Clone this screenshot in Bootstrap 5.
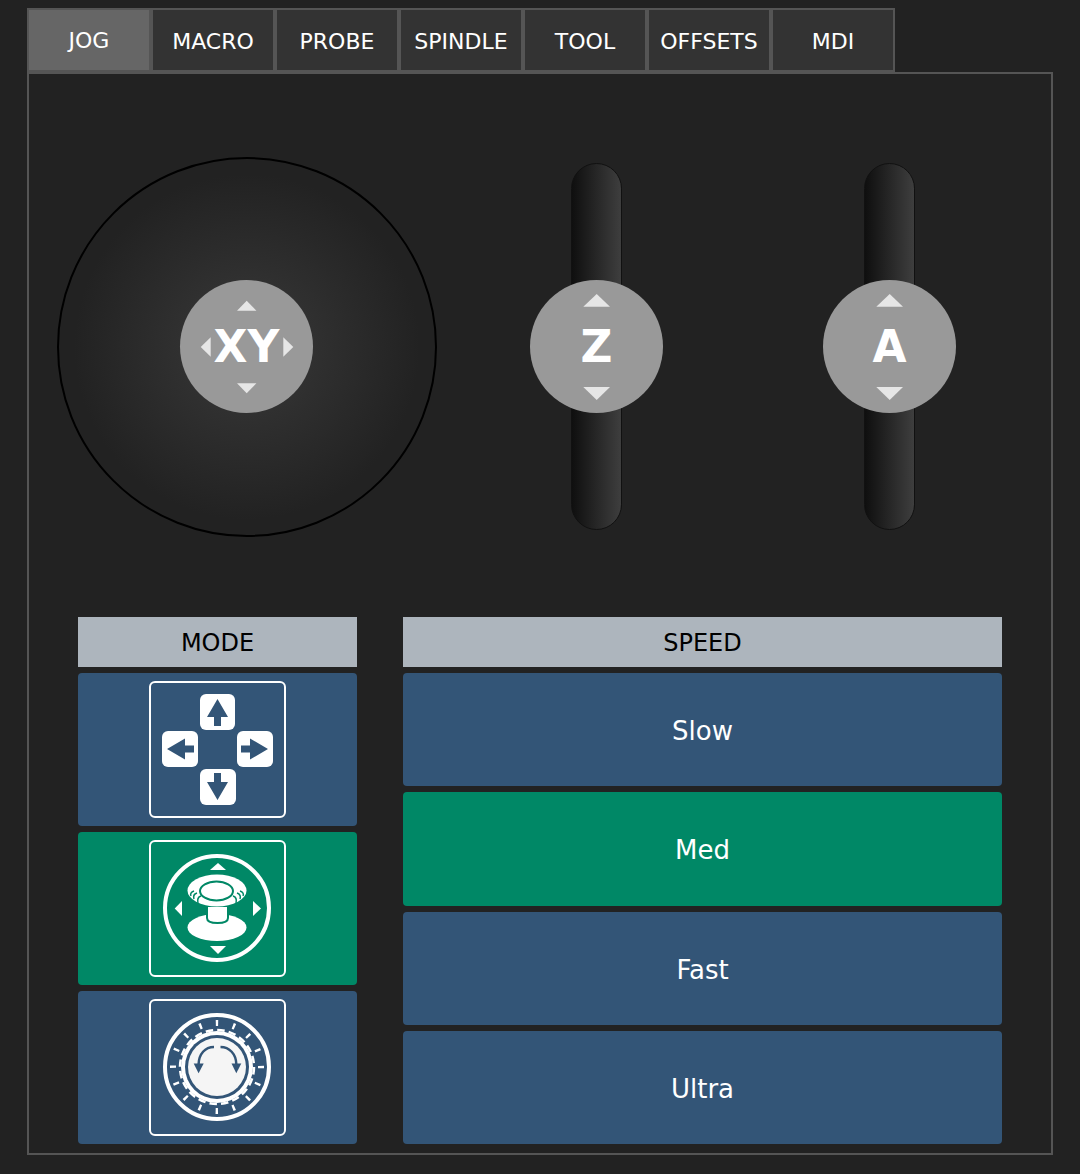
<!DOCTYPE html>
<html lang="en">
<head>
  <meta charset="UTF-8">
  <title>Jog</title>
  <link rel="stylesheet" href="https://cdn.jsdelivr.net/npm/bootstrap@5.3.0/dist/css/bootstrap.min.css">
  <style>
    body { background-color: #222; color: #fff; font-family: "DejaVu Sans", sans-serif; padding: 8px 0 0 27px; }
    .tab-strip { width: 868px; height: 64px; }
    .tab-btn { width: 124px; height: 64px; background: #333; border: 2px solid #555; color: #fff; font-size: 22px; padding: 2px 0 0; }
    .tab-btn.is-on { background: #666; padding: 0; }
    .jog-panel { width: 1026px; height: 1083px; border: 2px solid #555; padding: 83px 0 0 28px; }
    .jog-row { height: 380px; }
    .stick-area { width: 380px; height: 380px; border: 2px solid #000; border-radius: 50%; background: radial-gradient(circle closest-side, #393939 0%, #222 92%); }
    .stick-area .knob { margin: -1px 0 0 -1px; }
    .knob { width: 133px; height: 133px; border-radius: 50%; background: #999; font-size: 44px; font-weight: 700; line-height: 1; }
    .knob svg { position: absolute; left: 0; top: 0; }
    .slider-col { width: 133px; height: 367px; margin-top: 6px; }
    .col-z { margin-left: 93px; }
    .col-a { margin-left: 160px; }
    .slider-track { width: 51px; height: 367px; margin-left: 41px; border: 1px solid #111; border-radius: 26px; background: linear-gradient(to right, #0f0f0f, #3e3e3e); }
    .slider-col .knob { position: absolute; left: 0; top: 117px; }
    .lower-row { margin: 80px 0 0 21px; gap: 46px; }
    .mode-col { width: 279px; gap: 6px; }
    .speed-col { width: 599px; gap: 6px; }
    .head-box { height: 50px; background: #adb5bd; color: #000; font-size: 24px; padding-top: 2px; }
    .pick-btn { background: #335577; color: #fff; border: 0; border-radius: 4px; font-size: 26px; padding: 0; }
    .pick-btn.is-on { background: #008866; }
    .mode-btn { height: 153px; }
    .speed-btn { height: 113px; padding-top: 3px; }
    .speed-btn.is-on { height: 114px; }
    .ico-box { width: 137px; height: 137px; border: 2px solid #fff; border-radius: 6px; }
    .ico-box svg { display: block; margin: -2px; }
  </style>
</head>
<body>
  <div class="tab-strip d-flex">
    <button class="tab-btn is-on">JOG</button>
    <button class="tab-btn">MACRO</button>
    <button class="tab-btn">PROBE</button>
    <button class="tab-btn">SPINDLE</button>
    <button class="tab-btn">TOOL</button>
    <button class="tab-btn">OFFSETS</button>
    <button class="tab-btn">MDI</button>
  </div>

  <div class="jog-panel">
    <div class="jog-row d-flex align-items-start">
      <div class="stick-area d-flex align-items-center justify-content-center flex-shrink-0">
        <div class="knob position-relative d-flex align-items-center justify-content-center">
          XY
          <svg width="133" height="133" fill="#e6e6e6">
            <polygon points="66.7,20.7 57,30.7 76.4,30.7"/>
            <polygon points="30.7,57.3 30.7,76.7 20.7,67"/>
            <polygon points="103.3,57.3 103.3,76.7 113.3,67"/>
            <polygon points="57,103.3 76.4,103.3 66.7,113.3"/>
          </svg>
        </div>
      </div>
      <div class="slider-col col-z position-relative flex-shrink-0">
        <div class="slider-track"></div>
        <div class="knob d-flex align-items-center justify-content-center">
          Z
          <svg width="133" height="133" fill="#e6e6e6">
            <polygon points="66.7,14 53.3,26.7 80,26.7"/>
            <polygon points="53.3,107 80,107 66.7,120"/>
          </svg>
        </div>
      </div>
      <div class="slider-col col-a position-relative flex-shrink-0">
        <div class="slider-track"></div>
        <div class="knob d-flex align-items-center justify-content-center">
          A
          <svg width="133" height="133" fill="#e6e6e6">
            <polygon points="66.7,14 53.3,26.7 80,26.7"/>
            <polygon points="53.3,107 80,107 66.7,120"/>
          </svg>
        </div>
      </div>
    </div>

    <div class="lower-row d-flex">
      <div class="mode-col d-flex flex-column">
        <div class="head-box d-flex align-items-center justify-content-center">MODE</div>
        <button class="pick-btn mode-btn d-flex align-items-center justify-content-center">
          <span class="ico-box">
            <svg width="137" height="137" viewBox="0 0 137 137">
              <g fill="#fff">
                <rect x="51" y="13" width="35" height="36" rx="6"/>
                <rect x="13" y="50" width="36" height="36" rx="6"/>
                <rect x="88" y="50" width="36" height="36" rx="6"/>
                <rect x="51" y="88" width="36" height="36" rx="6"/>
              </g>
              <g fill="#335577">
                <polygon points="68.5,18 79,36 72,36 72,45 65,45 65,36 58,36"/>
                <polygon points="68.5,119 79,101 72,101 72,92 65,92 65,101 58,101"/>
                <polygon points="18,68 36,57.500 36,64.500 45,64.500 45,71.500 36,71.500 36,78.500"/>
                <polygon points="119,68 101,57.500 101,64.500 92,64.500 92,71.500 101,71.500 101,78.500"/>
              </g>
            </svg>
          </span>
        </button>
        <button class="pick-btn is-on mode-btn d-flex align-items-center justify-content-center">
          <span class="ico-box">
            <svg width="137" height="137" viewBox="0 0 137 137">
              <circle cx="68" cy="68" r="52" fill="none" stroke="#fff" stroke-width="4"/>
              <g fill="#fff">
                <polygon points="69,23 61,30 77,30"/>
                <polygon points="33,61 33,76 25.7,68.5"/>
                <polygon points="104,61 104,76 112,68.5"/>
                <polygon points="61,106 77,106 69,114"/>
                <ellipse cx="68" cy="87.500" rx="29.500" ry="13.500"/>
              </g>
              <path d="M58 66h21v12c0 3-4 5-10.500 5s-10.500-2-10.500-5z" fill="#fff" stroke="#008866" stroke-width="2"/>
              <ellipse cx="68" cy="50.500" rx="29.500" ry="16" fill="#fff"/>
              <ellipse cx="67.500" cy="51" rx="16.500" ry="9.500" fill="#fff" stroke="#008866" stroke-width="2"/>
              <g fill="none" stroke="#008866" stroke-width="1.500">
                <path d="M45 51c-3 1-4 3-3 5"/>
                <path d="M48 53c-3 1-4 3-3 6"/>
                <path d="M52 56c-3 1-4 3-3 7"/>
                <path d="M91 51c3 1 4 3 3 5"/>
                <path d="M88 53c3 1 4 3 3 6"/>
                <path d="M84 56c3 1 4 3 3 7"/>
              </g>
            </svg>
          </span>
        </button>
        <button class="pick-btn mode-btn d-flex align-items-center justify-content-center">
          <span class="ico-box">
            <svg width="137" height="137" viewBox="0 0 137 137">
              <circle cx="68" cy="68" r="52" fill="none" stroke="#fff" stroke-width="4"/>
              <circle cx="68" cy="68" r="44" fill="none" stroke="#fff" stroke-width="6" stroke-dasharray="2.400 14.880" transform="rotate(-91.560 68 68)"/>
              <circle cx="68" cy="68" r="36" fill="#fff"/>
              <circle cx="68" cy="68" r="37" fill="none" stroke="#fff" stroke-width="2.500" stroke-dasharray="7.500 4.120"/>
              <circle cx="68" cy="68" r="32" fill="#335577"/>
              <circle cx="68" cy="68" r="29" fill="#f5f5f5"/>
              <g fill="none" stroke="#335577" stroke-width="2.500">
                <path d="M65 48c-9 0-15 7-15.400 17"/>
                <path d="M71.500 48c9 0 15.500 7 15.800 17"/>
              </g>
              <g fill="#335577">
                <polygon points="44.700,64.500 54.700,64.500 49.600,74.300"/>
                <polygon points="82.500,64.500 92.300,64.500 87.300,74.300"/>
              </g>
            </svg>
          </span>
        </button>
      </div>
      <div class="speed-col d-flex flex-column">
        <div class="head-box d-flex align-items-center justify-content-center">SPEED</div>
        <button class="pick-btn speed-btn">Slow</button>
        <button class="pick-btn is-on speed-btn">Med</button>
        <button class="pick-btn speed-btn">Fast</button>
        <button class="pick-btn speed-btn">Ultra</button>
      </div>
    </div>
  </div>

  <script src="https://cdn.jsdelivr.net/npm/bootstrap@5.3.0/dist/js/bootstrap.bundle.min.js"></script>
</body>
</html>
